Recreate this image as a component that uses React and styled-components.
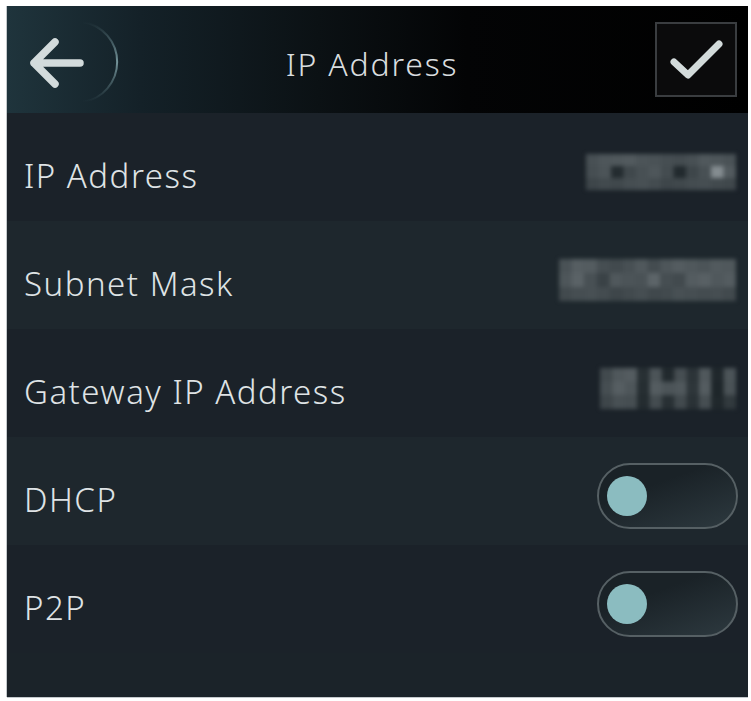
import React from "react";
import styled, { createGlobalStyle } from "styled-components";

const GlobalStyle = createGlobalStyle`
  html, body {
    margin: 0;
    padding: 0;
    background: #ffffff;
  }
  body {
    font-family: "Noto Sans", "Open Sans", sans-serif;
  }
`;

const Page = styled.div`
  width: 751px;
  height: 701px;
  padding: 6px 3px 4px 7px;
  box-sizing: border-box;
`;

const Screen = styled.div`
  width: 741px;
  height: 691px;
  display: flex;
  flex-direction: column;
  background: #1b2329;
  box-shadow: -1px 0 0 #c4c9cc, 0 1px 0 #c4c9cc;
  overflow: hidden;
`;

const Header = styled.header`
  height: 107px;
  flex-shrink: 0;
  display: grid;
  grid-template-columns: 1fr auto 1fr;
  align-items: center;
  padding-right: 11px;
  background: linear-gradient(90deg, #1f343c 0%, #142128 18%, #0b1114 42%, #030405 62%, #000 100%);
`;

const BackButton = styled.button`
  justify-self: start;
  width: 120px;
  height: 107px;
  padding: 0;
  border: 0;
  background: transparent;
  display: block;
`;

const Title = styled.h1`
  margin: 8px 0 0;
  font-size: 32px;
  font-weight: 300;
  letter-spacing: 1.8px;
  color: #d9dddf;
`;

const ConfirmButton = styled.button`
  justify-self: end;
  width: 82px;
  height: 75px;
  padding: 0;
  box-sizing: border-box;
  border: 2px solid #3a3d40;
  background: #0b0b0c;
  display: flex;
  align-items: center;
  justify-content: center;
`;

const List = styled.div`
  display: flex;
  flex-direction: column;
  flex: 1;
`;

const Row = styled.div`
  height: 108px;
  flex-shrink: 0;
  display: flex;
  align-items: center;
  justify-content: space-between;
  padding: 10px 10px 0 17px;
  box-sizing: border-box;
  background: ${({ $alt }) => ($alt ? "#1e272d" : "#1b2229")};
`;

const Label = styled.span`
  margin-top: 6px;
  font-size: 33px;
  font-weight: 300;
  letter-spacing: 1.5px;
  color: #dfe3e5;
`;

const Masked = styled.svg`
  margin-right: 2px;
  filter: blur(2px);
`;

const Toggle = styled.div`
  width: 141px;
  height: 66px;
  box-sizing: border-box;
  border: 2px solid #566064;
  border-radius: 33px;
  background: linear-gradient(160deg, #1a2227 35%, #2d393f 100%);
  display: flex;
  align-items: center;
  padding-left: 8px;
`;

const Knob = styled.div`
  width: 40px;
  height: 40px;
  border-radius: 50%;
  background: #8bbcc0;
`;

const fields = [
  {
    label: "IP Address",
    w: 150,
    h: 36,
    cells: [
      [72, 78, 80, 82, 76, 74, 70, 68, 72, 80, 78, 74],
      [70, 76, 36, 64, 72, 78, 68, 34, 62, 72, 132, 82],
      [62, 66, 64, 70, 72, 68, 62, 64, 68, 70, 66, 64],
    ],
  },
  {
    label: "Subnet Mask",
    w: 177,
    h: 42,
    cells: [
      [74, 86, 84, 70, 66, 72, 80, 68, 78, 84, 80, 76, 82, 80],
      [78, 90, 72, 58, 80, 76, 74, 92, 70, 66, 84, 88, 80, 84],
      [66, 70, 72, 68, 62, 66, 70, 64, 66, 72, 70, 68, 70, 66],
    ],
  },
  {
    label: "Gateway IP Address",
    w: 136,
    h: 41,
    cells: [
      [66, 80, 84, 40, 76, 34, 70, 44, 80, 32, 76],
      [70, 86, 78, 38, 84, 76, 80, 46, 84, 30, 74],
      [62, 72, 70, 36, 68, 40, 66, 42, 70, 32, 50],
    ],
  },
];

const MaskedValue = ({ w, h, cells }) => {
  const cw = w / cells[0].length;
  const ch = h / cells.length;
  return (
    <Masked width={w} height={h} viewBox={`0 0 ${w} ${h}`}>
      {cells.map((row, r) =>
        row.map((v, c) => (
          <rect
            key={`${r}-${c}`}
            x={c * cw}
            y={r * ch}
            width={cw + 0.5}
            height={ch + 0.5}
            fill={`rgb(${v},${v + 8},${v + 12})`}
          />
        ))
      )}
    </Masked>
  );
};

const BackIcon = () => (
  <svg width="120" height="107" viewBox="0 0 120 107">
    <defs>
      <linearGradient id="arcFade" x1="0" y1="0" x2="0" y2="1">
        <stop offset="0" stopColor="#6f9096" stopOpacity="0" />
        <stop offset="0.5" stopColor="#7fa0a6" stopOpacity="0.9" />
        <stop offset="1" stopColor="#6f9096" stopOpacity="0" />
      </linearGradient>
    </defs>
    <path
      d="M 76 16 A 40.5 40.5 0 0 1 76 96"
      fill="none"
      stroke="url(#arcFade)"
      strokeWidth="2"
    />
    <path
      d="M 73 57 L 27 57 M 48 36 L 27 57 L 48 78"
      fill="none"
      stroke="#d3dbdc"
      strokeWidth="7.5"
      strokeLinecap="round"
      strokeLinejoin="round"
    />
  </svg>
);

const CheckIcon = () => (
  <svg width="78" height="71" viewBox="0 0 78 71">
    <path
      d="M 17 38 L 31 51 L 62 20"
      fill="none"
      stroke="#d3dbdb"
      strokeWidth="7"
      strokeLinecap="round"
      strokeLinejoin="round"
    />
  </svg>
);

const switches = ["DHCP", "P2P"];

export default function App() {
  return (
    <>
      <GlobalStyle />
      <Page>
        <Screen>
          <Header>
            <BackButton aria-label="Back">
              <BackIcon />
            </BackButton>
            <Title>IP Address</Title>
            <ConfirmButton aria-label="Confirm">
              <CheckIcon />
            </ConfirmButton>
          </Header>
          <List>
            {fields.map((f, i) => (
              <Row key={f.label} $alt={i % 2 === 1}>
                <Label>{f.label}</Label>
                <MaskedValue w={f.w} h={f.h} cells={f.cells} />
              </Row>
            ))}
            {switches.map((name, i) => (
              <Row key={name} $alt={(i + fields.length) % 2 === 1}>
                <Label>{name}</Label>
                <Toggle>
                  <Knob />
                </Toggle>
              </Row>
            ))}
          </List>
        </Screen>
      </Page>
    </>
  );
}
